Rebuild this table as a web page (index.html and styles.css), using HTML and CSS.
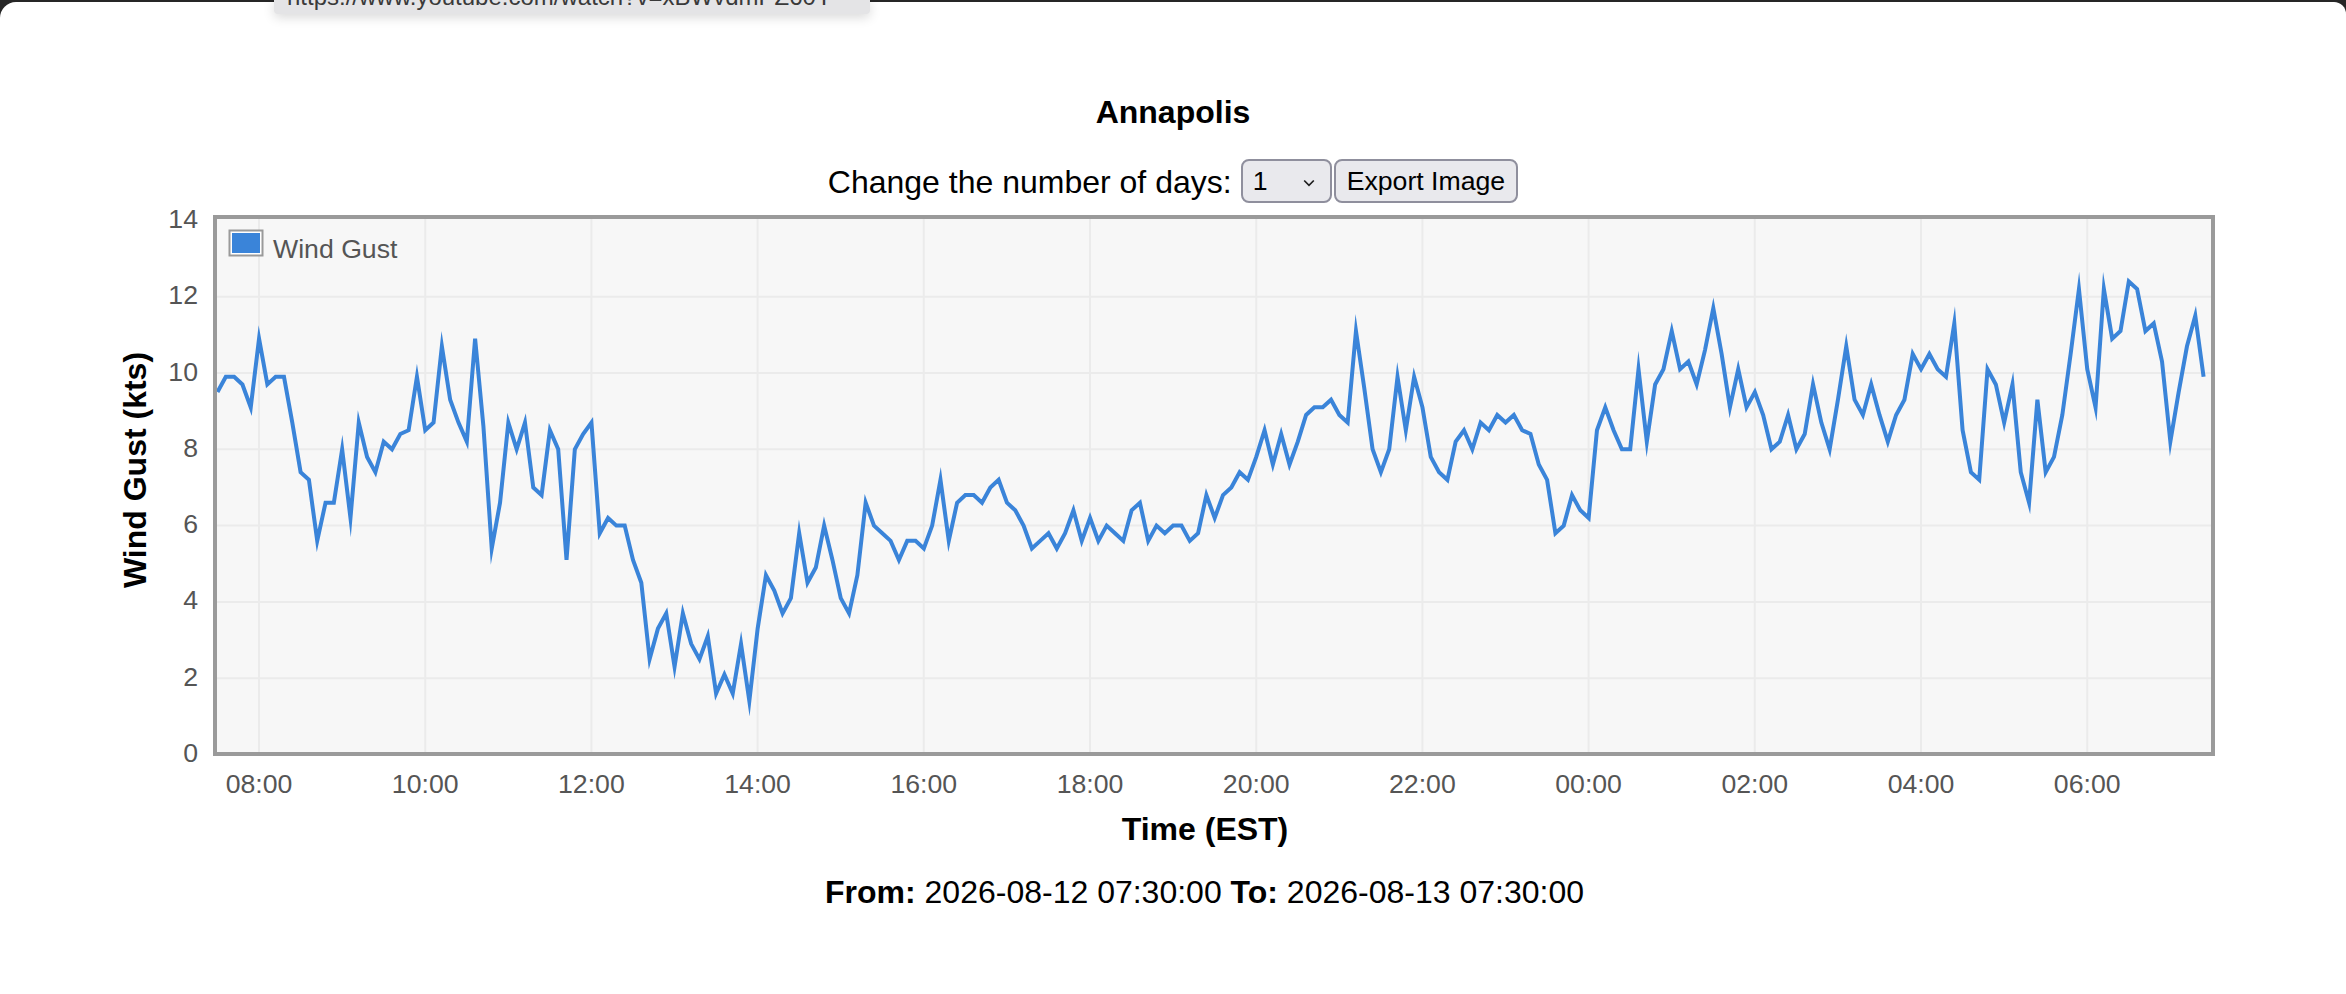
FILE: index.html
```html
<!DOCTYPE html>
<html lang="en">
<head>
<meta charset="utf-8">
<title>Annapolis Wind Gust</title>
<link rel="stylesheet" href="styles.css">
</head>
<body>
<div class="window">
  <div class="status-bubble"><span class="status-text">https://www.youtube.com/watch?v=xBWvdmPZ60Y</span></div>

  <h1 class="title">Annapolis</h1>

  <div class="controls">
    <label class="controls-label" for="days">Change the number of days:</label>
    <span class="select-wrap">
      <select id="days" class="days-select">
        <option>1</option>
        <option>2</option>
        <option>3</option>
        <option>7</option>
      </select>
      <svg class="chevron" width="12" height="8" viewBox="0 0 12 8"><path d="M1.2 1.5 L6 6.3 L10.8 1.5" fill="none" stroke="#1e1e1e" stroke-width="1.7"/></svg>
    </span>
    <button class="export-btn" type="button">Export Image</button>
  </div>

  <div class="chart">
    <svg class="chart-svg" width="2346" height="660" viewBox="0 205 2346 660">
      <rect class="plot-bg" x="215" y="217" width="1998" height="537"/>
      <g class="grid">
        <line x1="217" x2="2211" y1="296.7" y2="296.7"/>
        <line x1="217" x2="2211" y1="373" y2="373"/>
        <line x1="217" x2="2211" y1="449.3" y2="449.3"/>
        <line x1="217" x2="2211" y1="525.6" y2="525.6"/>
        <line x1="217" x2="2211" y1="601.9" y2="601.9"/>
        <line x1="217" x2="2211" y1="678.2" y2="678.2"/>
        <line y1="219" y2="752" x1="259" x2="259"/>
        <line y1="219" y2="752" x1="425.2" x2="425.2"/>
        <line y1="219" y2="752" x1="591.4" x2="591.4"/>
        <line y1="219" y2="752" x1="757.6" x2="757.6"/>
        <line y1="219" y2="752" x1="923.8" x2="923.8"/>
        <line y1="219" y2="752" x1="1090" x2="1090"/>
        <line y1="219" y2="752" x1="1256.2" x2="1256.2"/>
        <line y1="219" y2="752" x1="1422.4" x2="1422.4"/>
        <line y1="219" y2="752" x1="1588.6" x2="1588.6"/>
        <line y1="219" y2="752" x1="1754.8" x2="1754.8"/>
        <line y1="219" y2="752" x1="1921" x2="1921"/>
        <line y1="219" y2="752" x1="2087.2" x2="2087.2"/>
      </g>
      <polyline class="series" transform="translate(217.5 754.5) scale(8.31 -38.15)" points="0,9.5 1,9.9 2,9.9 3,9.7 4,9.1 5,10.9 6,9.7 7,9.9 8,9.9 9,8.7 10,7.4 11,7.2 12,5.6 13,6.6 14,6.6 15,8 16,6.2 17,8.7 18,7.8 19,7.4 20,8.2 21,8 22,8.4 23,8.5 24,9.9 25,8.5 26,8.7 27,10.7 28,9.3 29,8.7 30,8.2 31,10.9 32,8.6 33,5.4 34,6.6 35,8.7 36,8 37,8.7 38,7 39,6.8 40,8.5 41,8 42,5.1 43,8 44,8.4 45,8.7 46,5.8 47,6.2 48,6 49,6 50,5.1 51,4.5 52,2.5 53,3.3 54,3.7 55,2.3 56,3.7 57,2.9 58,2.5 59,3.1 60,1.6 61,2.1 62,1.6 63,2.9 64,1.4 65,3.3 66,4.7 67,4.3 68,3.7 69,4.1 70,5.8 71,4.5 72,4.9 73,6 74,5.1 75,4.1 76,3.7 77,4.7 78,6.6 79,6 80,5.8 81,5.6 82,5.1 83,5.6 84,5.6 85,5.4 86,6 87,7.2 88,5.6 89,6.6 90,6.8 91,6.8 92,6.6 93,7 94,7.2 95,6.6 96,6.4 97,6 98,5.4 99,5.6 100,5.8 101,5.4 102,5.8 103,6.4 104,5.6 105,6.2 106,5.6 107,6 108,5.8 109,5.6 110,6.4 111,6.6 112,5.6 113,6 114,5.8 115,6 116,6 117,5.6 118,5.8 119,6.8 120,6.2 121,6.8 122,7 123,7.4 124,7.2 125,7.8 126,8.5 127,7.6 128,8.4 129,7.6 130,8.2 131,8.9 132,9.1 133,9.1 134,9.3 135,8.9 136,8.7 137,11.1 138,9.6 139,8 140,7.4 141,8 142,9.9 143,8.5 144,9.9 145,9.1 146,7.8 147,7.4 148,7.2 149,8.2 150,8.5 151,8 152,8.7 153,8.5 154,8.9 155,8.7 156,8.9 157,8.5 158,8.4 159,7.6 160,7.2 161,5.8 162,6 163,6.8 164,6.4 165,6.2 166,8.5 167,9.1 168,8.5 169,8 170,8 171,10.1 172,8.2 173,9.7 174,10.1 175,11.1 176,10.1 177,10.3 178,9.7 179,10.6 180,11.7 181,10.5 182,9.1 183,10.1 184,9.1 185,9.5 186,8.9 187,8 188,8.2 189,8.9 190,8 191,8.4 192,9.7 193,8.7 194,8 195,9.3 196,10.7 197,9.3 198,8.9 199,9.7 200,8.9 201,8.2 202,8.9 203,9.3 204,10.5 205,10.1 206,10.5 207,10.1 208,9.9 209,11.3 210,8.5 211,7.4 212,7.2 213,10.1 214,9.7 215,8.7 216,9.7 217,7.4 218,6.6 219,9.3 220,7.4 221,7.8 222,8.9 223,10.5 224,12.2 225,10.1 226,9.1 227,12.2 228,10.9 229,11.1 230,12.4 231,12.2 232,11.1 233,11.3 234,10.3 235,8.2 236,9.5 237,10.7 238,11.5 239,9.9"/>
      <rect class="plot-border" x="215" y="217" width="1998" height="537"/>

      <rect class="legend-frame" x="229.5" y="230.5" width="33" height="25"/>
      <rect class="legend-fill" x="232" y="233" width="28" height="20"/>
      <text class="legend-text" x="273" y="258">Wind Gust</text>

      <g class="tick y-tick">
        <text x="198" y="227.9">14</text>
        <text x="198" y="304.2">12</text>
        <text x="198" y="380.5">10</text>
        <text x="198" y="456.8">8</text>
        <text x="198" y="533.1">6</text>
        <text x="198" y="609.4">4</text>
        <text x="198" y="685.7">2</text>
        <text x="198" y="762">0</text>
      </g>
      <g class="tick x-tick">
        <text x="259" y="793">08:00</text>
        <text x="425.2" y="793">10:00</text>
        <text x="591.4" y="793">12:00</text>
        <text x="757.6" y="793">14:00</text>
        <text x="923.8" y="793">16:00</text>
        <text x="1090" y="793">18:00</text>
        <text x="1256.2" y="793">20:00</text>
        <text x="1422.4" y="793">22:00</text>
        <text x="1588.6" y="793">00:00</text>
        <text x="1754.8" y="793">02:00</text>
        <text x="1921" y="793">04:00</text>
        <text x="2087.2" y="793">06:00</text>
      </g>
      <text class="axis-title" x="1205" y="840">Time (EST)</text>
      <text class="axis-title" transform="translate(146 470) rotate(-90)">Wind Gust (kts)</text>
    </svg>
  </div>

  <p class="range"><b>From:</b> 2026-08-12 07:30:00 <b>To:</b> 2026-08-13 07:30:00</p>
</div>
</body>
</html>
```

FILE: styles.css
```css
* {
  box-sizing: border-box;
}

html,
body {
  margin: 0;
  padding: 0;
}

body {
  background: #262626;
  font-family: "Liberation Sans", Arial, sans-serif;
  color: #000;
}

.window {
  display: flow-root;
  position: relative;
  margin-top: 2px;
  min-height: 992px;
  background: #ffffff;
  border-radius: 16px 12px 0 0;
}

.status-bubble {
  position: absolute;
  left: 274px;
  top: -2px;
  width: 596px;
  height: 14px;
  padding-left: 13px;
  overflow: hidden;
  background: #e4e4e6;
  border-radius: 0 0 4px 4px;
  box-shadow: 0 3px 12px rgba(0, 0, 0, 0.16);
  font-size: 24px;
  line-height: 24px;
  color: #3a3a3a;
  white-space: nowrap;
}

.status-text {
  display: block;
  margin-top: -15px;
}

.title {
  margin: 92px 0 0;
  font-size: 32px;
  line-height: 36px;
  font-weight: bold;
  text-align: center;
}

.controls {
  display: flex;
  justify-content: center;
  align-items: center;
  margin-top: 29px;
  height: 44px;
}

.controls-label {
  font-size: 32px;
  line-height: 36px;
  padding-top: 1px;
  margin-right: 9px;
}

.select-wrap {
  position: relative;
  display: block;
  width: 91px;
  height: 44px;
}

.days-select {
  appearance: none;
  -webkit-appearance: none;
  display: block;
  width: 91px;
  height: 44px;
  margin: 0;
  padding: 0 0 0 10px;
  border: 2px solid #8f8f9d;
  border-radius: 8px;
  background: #e9e9ed;
  color: #000;
  font-family: "Liberation Sans", Arial, sans-serif;
  font-size: 26.67px;
}

.chevron {
  position: absolute;
  left: 62px;
  top: 20px;
  pointer-events: none;
}

.export-btn {
  height: 44px;
  margin: 0 0 0 2px;
  padding: 0 11px;
  border: 2px solid #8f8f9d;
  border-radius: 8px;
  background: #e9e9ed;
  color: #000;
  font-family: "Liberation Sans", Arial, sans-serif;
  font-size: 26.67px;
}

.chart {
  margin-top: 2px;
}

.chart-svg {
  display: block;
}

.plot-bg {
  fill: #f7f7f7;
}

.grid line {
  stroke: #ebebeb;
  stroke-width: 2;
}

.series {
  fill: none;
  stroke: #3a84d9;
  stroke-width: 4;
  stroke-linejoin: miter;
  stroke-miterlimit: 10;
  vector-effect: non-scaling-stroke;
}

.plot-border {
  fill: none;
  stroke: #9a9a9a;
  stroke-width: 4;
}

.legend-frame {
  fill: #ffffff;
  stroke: #9a9a9a;
  stroke-width: 2;
}

.legend-fill {
  fill: #3a84d9;
}

.legend-text {
  font-family: "Liberation Sans", Arial, sans-serif;
  font-size: 26.67px;
  fill: #555555;
}

.tick text {
  font-family: "Liberation Sans", Arial, sans-serif;
  font-size: 26.67px;
  fill: #555555;
}

.y-tick text {
  text-anchor: end;
}

.x-tick text {
  text-anchor: middle;
}

.axis-title {
  font-family: "Liberation Sans", Arial, sans-serif;
  font-size: 32px;
  font-weight: bold;
  fill: #000;
  text-anchor: middle;
}

.range {
  margin: 9px 0 0;
  padding-left: 63px;
  font-size: 32px;
  line-height: 36px;
  text-align: center;
}
```
